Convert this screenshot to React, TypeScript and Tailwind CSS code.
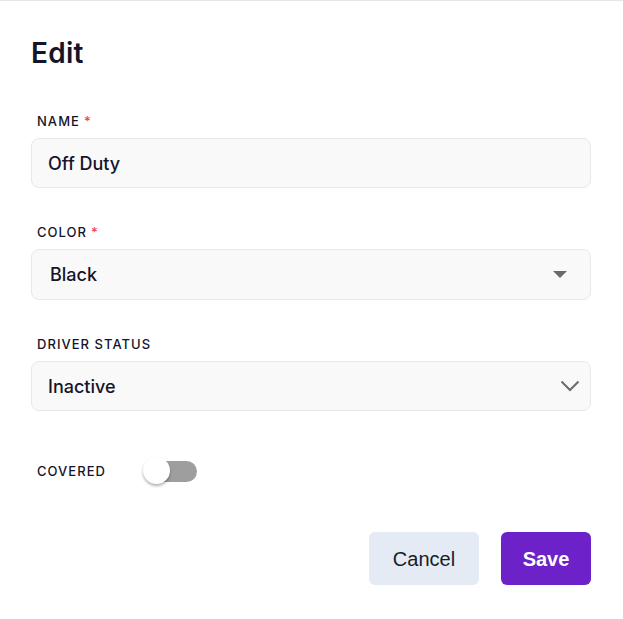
export default function App() {
  return (
    <div className="min-h-screen bg-white border-t border-[#e6e6e6] font-['Inter','Noto_Sans',sans-serif] text-[#14142b]">
      <div className="pt-[35px] pl-[31px] pr-[32px]">
        <h1 className="text-[28px] leading-[34px] font-semibold mb-[43px] tracking-[0.01em]">Edit</h1>

        {/* Name */}
        <Label text="NAME" required />
        <div className="h-[50px] rounded-lg border border-[#e8e8e8] bg-[#f9f9f9] flex items-center pl-4 text-[18px] font-medium">
          Off Duty
        </div>

        {/* Color */}
        <div className="mt-[36px]">
          <Label text="COLOR" required />
          <div className="h-[51px] rounded-lg border border-[#e8e8e8] bg-[#f9f9f9] flex items-center justify-between pl-[18px] pr-[23px] text-[18px] font-medium">
            <span>Black</span>
            <svg width="14" height="8" viewBox="0 0 14 8">
              <path d="M0 0 H14 L7 7 Z" fill="#6b6b6b" />
            </svg>
          </div>
        </div>

        {/* Driver status */}
        <div className="mt-[36px]">
          <Label text="DRIVER STATUS" />
          <div className="h-[50px] rounded-lg border border-[#e8e8e8] bg-[#f9f9f9] flex items-center justify-between pl-4 pr-[10px] text-[18px] font-medium">
            <span>Inactive</span>
            <svg width="20" height="12" viewBox="0 0 20 12">
              <path d="M1.5 1.5 L10 10 L18.5 1.5" fill="none" stroke="#6b6b6b" strokeWidth="2" />
            </svg>
          </div>
        </div>

        {/* Covered */}
        <div className="mt-[46px] pl-[6px] flex items-center h-[28px]">
          <span className="text-[13px] leading-4 font-medium tracking-[0.08em] w-[106px]">COVERED</span>
          <div className="relative w-[54px] h-[28px]">
            <div className="absolute left-[2px] right-0 top-[4px] h-[21px] rounded-full bg-[#9e9e9e]" />
            <div className="absolute left-0 top-0 w-[27px] h-[27px] rounded-full bg-white shadow-[0_2px_3px_rgba(0,0,0,0.3)]" />
          </div>
        </div>

        {/* Actions */}
        <div className="mt-[47px] flex justify-end gap-[22px] font-['Liberation_Sans',Arial,sans-serif] text-[20px]">
          <button className="w-[110px] h-[53px] rounded-md bg-[#e5ebf5] text-[#1c1c24]">Cancel</button>
          <button className="w-[90px] h-[53px] rounded-md bg-[#6c22c8] text-white font-bold">Save</button>
        </div>
      </div>
    </div>
  );
}

function Label({ text, required }: { text: string; required?: boolean }) {
  return (
    <div className="pl-[6px] text-[13px] leading-4 font-medium tracking-[0.08em] mb-[9px]">
      {text}
      {required && <span className="text-[#ef4444] ml-[4px]">*</span>}
    </div>
  );
}
